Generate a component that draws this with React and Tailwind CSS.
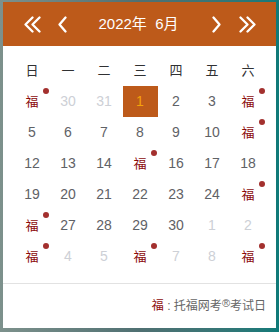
import React from 'react';

const weeks = ['日', '一', '二', '三', '四', '五', '六'];

// type: n = normal, f = faded (other month), s = selected, x = exam day (福)
const rows = [
    [['x'], ['f', 30], ['f', 31], ['s', 1], ['n', 2], ['n', 3], ['x']],
    [['n', 5], ['n', 6], ['n', 7], ['n', 8], ['n', 9], ['n', 10], ['x']],
    [['n', 12], ['n', 13], ['n', 14], ['x'], ['n', 16], ['n', 17], ['n', 18]],
    [['n', 19], ['n', 20], ['n', 21], ['n', 22], ['n', 23], ['n', 24], ['x']],
    [['x'], ['n', 27], ['n', 28], ['n', 29], ['n', 30], ['f', 1], ['f', 2]],
    [['x'], ['f', 4], ['f', 5], ['x'], ['f', 7], ['f', 8], ['x']],
];

function Chevron({ double, right }) {
    return (
        <svg width={double ? 17 : 9} height="17" viewBox={double ? '0 0 17 17' : '0 0 9 17'} fill="none" stroke="white" strokeWidth="2.3" strokeLinecap="round" strokeLinejoin="round" className={right ? 'rotate-180' : ''}>
            {double ? (
                <>
                    <path d="M8.5 1.5 L1.5 8.5 L8.5 15.5" />
                    <path d="M15.5 1.5 L8.5 8.5 L15.5 15.5" />
                </>
            ) : (
                <path d="M7.5 1.5 L1.5 8.5 L7.5 15.5" />
            )}
        </svg>
    );
}

function Cell({ cell }) {
    const [type, value] = cell;
    if (type === 's') {
        return (
            <div className="h-[31px] flex items-center justify-center">
                <div className="w-[35px] h-[31px] bg-[#bd5a1a] text-[#f5a20a] flex items-center justify-center">{value}</div>
            </div>
        );
    }
    if (type === 'x') {
        return (
            <div className="relative h-[31px] flex items-center justify-center text-[13px] text-[#8b0a0a]">
                福
                <span className="absolute left-[29px] top-[2px] w-[6px] h-[6px] rounded-full bg-[#a3302e]" />
            </div>
        );
    }
    return (
        <div className={`h-[31px] flex items-center justify-center ${type === 'f' ? 'text-[#cdd0d6]' : 'text-[#5f6266]'}`}>
            {value}
        </div>
    );
}

export default function App() {
    return (
        <div className="w-[279px] h-[332px] bg-gradient-to-r from-[#7d918c] via-[#4f7072] to-[#0e7a79] pt-[2px] pl-[3px]" style={{ fontFamily: '"Liberation Sans", "Noto Sans CJK SC", sans-serif' }}>
            <div className="w-[273px] h-[326px] bg-white flex flex-col">
                <div className="h-[44px] bg-[#bd5a1a] flex items-center text-white pl-[21px] pr-[20px]">
                    <Chevron double />
                    <div className="ml-[17px]"><Chevron /></div>
                    <div className="flex-1 text-center text-[15px] pr-[2px]">2022年&nbsp;&nbsp;6月</div>
                    <div className="mr-[18px]"><Chevron right /></div>
                    <Chevron double right />
                </div>
                <div className="pl-[11px] pr-[10px] pt-[9px]">
                    <div className="grid grid-cols-7 text-[13px] text-[#303133]">
                        {weeks.map(w => (
                            <div key={w} className="h-[31px] flex items-center justify-center">{w}</div>
                        ))}
                    </div>
                    <div className="grid grid-cols-7 text-[14px]">
                        {rows.map((row, i) => row.map((cell, j) => <Cell key={`${i}-${j}`} cell={cell} />))}
                    </div>
                </div>
                <div className="mt-[11px] border-t border-[#e2e2e2] flex-1 flex items-center justify-end pr-[10px] text-[12px] text-[#666]">
                    <span className="text-[#8b0a0a]">福</span>
                    <span>&nbsp;:&nbsp;托福网考</span>
                    <sup className="text-[11px] relative top-[-3px]">®</sup>
                    <span>考试日</span>
                </div>
            </div>
        </div>
    );
}
